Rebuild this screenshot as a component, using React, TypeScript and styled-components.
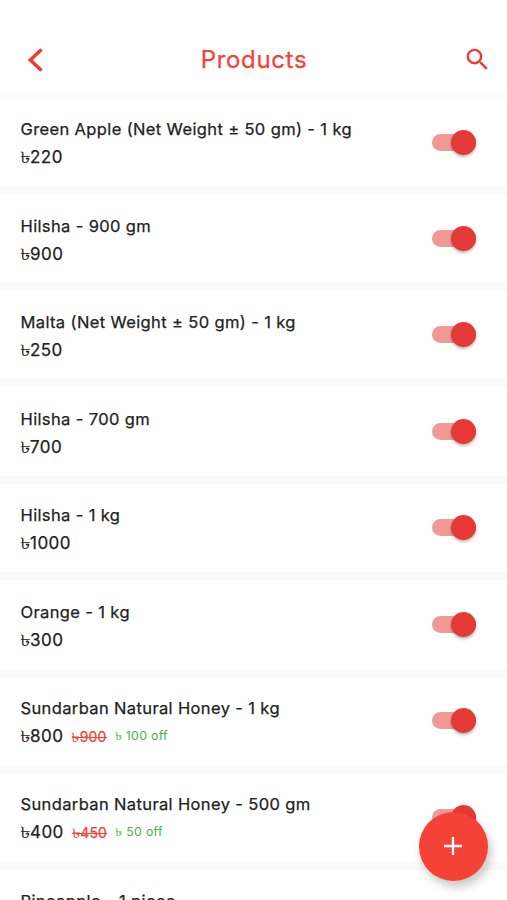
import React from 'react';
import styled, { createGlobalStyle } from 'styled-components';

const Global = createGlobalStyle`
  * { box-sizing: border-box; }
  body { margin: 0; background: #fff; overflow: hidden; }
`;

const Screen = styled.main`
  position: relative;
  height: 900px;
  overflow: hidden;
  background: #fff;
  color: #222;
  font-family: Inter, 'Noto Sans', sans-serif;
  -webkit-text-stroke: 0.25px currentColor;
`;

const Header = styled.header`
  display: grid;
  grid-template-columns: 71px 1fr 71px;
  align-items: center;
  height: 90.1px;
  padding-top: 29px;
`;

const Title = styled.h1`
  margin: 0;
  padding-left: 1px;
  text-align: center;
  color: #f44336;
  font-size: 24px;
  line-height: 30px;
  font-weight: 400;
  letter-spacing: 0.65px;
`;

const IconButton = styled.button<{ $end?: boolean }>`
  display: flex;
  justify-content: ${(p) => (p.$end ? 'flex-end' : 'flex-start')};
  padding: 0 ${(p) => (p.$end ? '15px' : '0')} 0 ${(p) => (p.$end ? '0' : '21px')};
  border: 0;
  background: none;
  color: #f0392f;
`;

const Row = styled.section`
  display: flex;
  justify-content: space-between;
  height: 96.45px;
  padding: 21.3px 31.4px 0 20.5px;
  border-top: 8px solid #fafafa;

  &:first-of-type {
    border-top-color: #fdfdfd;
  }
`;

const Name = styled.div`
  font-size: 16.5px;
  line-height: 20px;
  font-weight: 400;
  letter-spacing: 0.37px;
  white-space: nowrap;
`;

const Prices = styled.div`
  display: flex;
  align-items: center;
  height: 20px;
  margin-top: 8px;
  line-height: 20px;
  white-space: nowrap;
`;

const Taka = styled.span`
  display: inline-block;
  width: 0.59em;
  transform: scale(1.25, 0.92);
  transform-origin: 0 70%;
  margin-left: -0.03em;
  -webkit-text-stroke-width: 0;
`;

const Price = styled.span`
  font-size: 17px;
  font-weight: 400;
  letter-spacing: 0.45px;
`;

const OldPrice = styled.span`
  position: relative;
  margin-left: 8.5px;
  padding-top: 1px;
  font-size: 14px;
  color: #f44336;
  font-weight: 400;
  letter-spacing: 0.2px;

  &::after {
    content: '';
    position: absolute;
    left: 0;
    right: 0;
    top: 11px;
    height: 1px;
    background: currentColor;
  }
`;

const Discount = styled.span`
  margin-left: 8.5px;
  font-size: 12.3px;
  color: #4caf50;
  letter-spacing: 0.3px;
  -webkit-text-stroke-width: 0;
`;

const Track = styled.div`
  display: flex;
  align-items: center;
  justify-content: flex-end;
  width: 44px;
  height: 17px;
  margin-top: 14.2px;
  border-radius: 9px;
  background: #f19997;
`;

const Thumb = styled.div`
  flex: none;
  width: 25px;
  height: 25px;
  border-radius: 50%;
  background: #e53935;
  box-shadow: 0 2px 3px rgba(0, 0, 0, 0.28);
`;

const AddButton = styled.button`
  position: absolute;
  left: 418.5px;
  top: 811.5px;
  display: grid;
  place-items: center;
  width: 69px;
  height: 69px;
  padding: 0;
  border: 0;
  border-radius: 50%;
  background: #f44336;
  color: #fff;
  box-shadow: 3px 6px 10px rgba(0, 0, 0, 0.22);
`;

type Product = { name: string; price: number; old?: number };

const products: Product[] = [
  { name: 'Green Apple (Net Weight ± 50 gm) - 1 kg', price: 220 },
  { name: 'Hilsha - 900 gm', price: 900 },
  { name: 'Malta (Net Weight ± 50 gm) - 1 kg', price: 250 },
  { name: 'Hilsha - 700 gm', price: 700 },
  { name: 'Hilsha - 1 kg', price: 1000 },
  { name: 'Orange - 1 kg', price: 300 },
  { name: 'Sundarban Natural Honey - 1 kg', price: 800, old: 900 },
  { name: 'Sundarban Natural Honey - 500 gm', price: 400, old: 450 },
  { name: 'Pineapple - 1 piece', price: 50 },
];

export default function App() {
  return (
    <Screen>
      <Global />
      <Header>
        <IconButton aria-label="Back">
          <svg width="30" height="30" viewBox="0 0 30 30" fill="none" stroke="currentColor" strokeWidth="3.4">
            <path d="M20.5 4.5 9.3 15l11.2 10.5" />
          </svg>
        </IconButton>
        <Title>Products</Title>
        <IconButton $end aria-label="Search">
          <svg width="29" height="29" viewBox="0 0 24 24" fill="currentColor">
            <path d="M15.5 14h-.79l-.28-.27A6.47 6.47 0 0 0 16 9.5 6.5 6.5 0 1 0 9.5 16c1.61 0 3.09-.59 4.23-1.57l.27.28v.79l5 4.99L20.49 19l-4.99-5zm-6 0C7.01 14 5 11.99 5 9.5S7.01 5 9.5 5 14 7.01 14 9.5 11.99 14 9.5 14z" />
          </svg>
        </IconButton>
      </Header>
      {products.map((p) => (
        <Row key={p.name}>
          <div>
            <Name>{p.name}</Name>
            <Prices>
              <Price><Taka>৳</Taka>{p.price}</Price>
              {p.old && <OldPrice><Taka>৳</Taka>{p.old}</OldPrice>}
              {p.old && <Discount><Taka>৳</Taka> {p.old - p.price} off</Discount>}
            </Prices>
          </div>
          <Track role="switch" aria-checked="true">
            <Thumb />
          </Track>
        </Row>
      ))}
      <AddButton aria-label="Add product">
        <svg width="20" height="20" viewBox="0 0 20 20" stroke="currentColor" strokeWidth="2.3">
          <path d="M10 1v18M1 10h18" />
        </svg>
      </AddButton>
    </Screen>
  );
}
